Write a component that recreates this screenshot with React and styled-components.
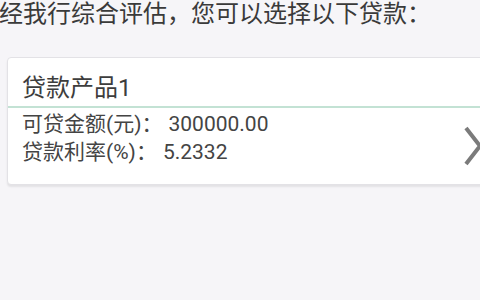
import React from "react";
import styled, { createGlobalStyle } from "styled-components";

const Global = createGlobalStyle`
  html, body {
    margin: 0;
    padding: 0;
    overflow: hidden;
    background: #f6f5f8;
  }
  body {
    font-family: Roboto, "Noto Sans CJK SC", "Noto Sans", sans-serif;
    color: #3f3f3f;
  }
`;

const Page = styled.div`
  width: 480px;
  height: 300px;
  overflow: hidden;
  display: flex;
  flex-direction: column;
`;

const Heading = styled.div`
  font-size: 24px;
  line-height: 28px;
  color: #3a3a3a;
  white-space: nowrap;
  margin-left: -1px;
`;

const Card = styled.div`
  margin: 29px 0 0 7px;
  width: 490px;
  flex: none;
  background: #ffffff;
  border: 1px solid #e3e2e6;
  border-radius: 4px;
  box-shadow: 0 2px 2px rgba(0, 0, 0, 0.08);
  box-sizing: border-box;
`;

const CardHeader = styled.div`
  padding: 16px 14px 4px;
  font-size: 24px;
  line-height: 28px;
  color: #3d3d3d;
  border-bottom: 2px solid #c3e2d4;
`;

const CardBody = styled.div`
  display: flex;
  padding: 2px 14px 18px;
`;

const Lines = styled.div`
  flex: 1;
  display: flex;
  flex-direction: column;
`;

const Line = styled.div`
  font-size: 21px;
  line-height: 28px;
  color: #444444;
  white-space: nowrap;
`;

const Value = styled.span`
  margin-left: 6px;
`;

const Chevron = styled.svg`
  flex: none;
  margin-top: 16px;
  width: 18px;
  height: 40px;
`;

export default function App() {
  return (
    <Page>
      <Global />
      <Heading>经我行综合评估，您可以选择以下贷款：</Heading>
      <Card>
        <CardHeader>贷款产品1</CardHeader>
        <CardBody>
          <Lines>
            <Line>
              可贷金额(元)：<Value>300000.00</Value>
            </Line>
            <Line>
              贷款利率(%)：<Value>5.2332</Value>
            </Line>
          </Lines>
          <Chevron viewBox="0 0 18 40">
            <polyline
              points="2,2 16,20 2,38"
              fill="none"
              stroke="#7b7b7b"
              strokeWidth="4"
            />
          </Chevron>
        </CardBody>
      </Card>
    </Page>
  );
}
